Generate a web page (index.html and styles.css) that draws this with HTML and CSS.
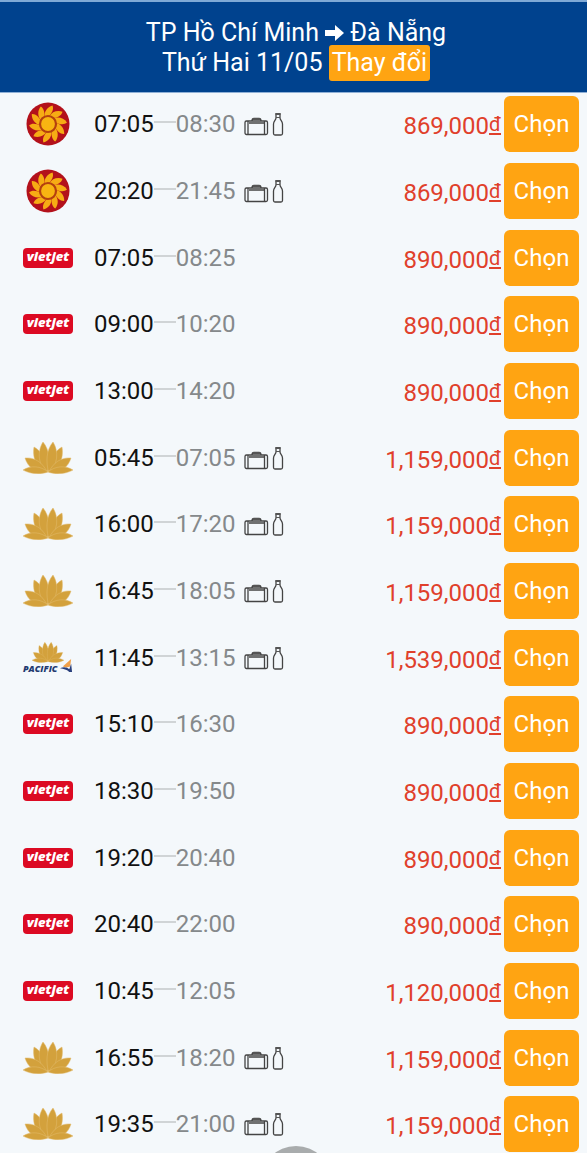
FILE: index.html
```html
<!DOCTYPE html>
<html lang="vi">
<head>
<meta charset="utf-8">
<meta name="viewport" content="width=device-width, initial-scale=1">
<title>TP Hồ Chí Minh - Đà Nẵng</title>
<link rel="stylesheet" href="styles.css">
</head>
<body>
<svg class="sprite" aria-hidden="true">
  <symbol id="sun" viewBox="0 0 44 44">
    <circle cx="22" cy="22" r="21.5" fill="#b3111b"/>
    <g fill="#f6ac14">
      <path id="ray" d="M18.500 14.500C18 10 21 5 26.500 3.500C28 7 26 11.500 22.500 14.500Z"/>
      <use href="#ray" transform="rotate(36 22 22)"/>
      <use href="#ray" transform="rotate(72 22 22)"/>
      <use href="#ray" transform="rotate(108 22 22)"/>
      <use href="#ray" transform="rotate(144 22 22)"/>
      <use href="#ray" transform="rotate(180 22 22)"/>
      <use href="#ray" transform="rotate(216 22 22)"/>
      <use href="#ray" transform="rotate(252 22 22)"/>
      <use href="#ray" transform="rotate(288 22 22)"/>
      <use href="#ray" transform="rotate(324 22 22)"/>
    </g>
    <circle cx="22" cy="22" r="8" fill="#f8b412" stroke="#b4400f" stroke-width="2.2"/>
  </symbol>
  <symbol id="lotus" viewBox="0 0 50 32">
    <g fill="#d3a13c" stroke="#e3bd70" stroke-width=".5">
      <path d="M11 5C19 9 23 19 23 30C14 28 9 16 11 5Z"/>
      <path d="M39 5C31 9 27 19 27 30C36 28 41 16 39 5Z"/>
      <path d="M20 0C27 8 27 20 24.500 30C15 24 14 9 20 0Z"/>
      <path d="M30 0C23 8 23 20 25.500 30C35 24 36 9 30 0Z"/>
      <path d="M2 16C12 15 20 21 24 30C13 31 5 26 2 16Z"/>
      <path d="M48 16C38 15 30 21 26 30C37 31 45 26 48 16Z"/>
      <path d="M0 28C8 23 18 24 25 30C17 33 7 32 0 28Z"/>
      <path d="M50 28C42 23 32 24 25 30C33 33 43 32 50 28Z"/>
    </g>
  </symbol>
  <symbol id="tail" viewBox="0 0 14 15">
    <path d="M3 8L12 0L11 8L7 9Z" fill="#f0a04a"/>
    <path d="M0 10C4 8 8 9 10 11L12 5L13 14H10C7 11 4 11 0 10Z" fill="#293f7c"/>
  </symbol>
  <symbol id="bags" viewBox="0 0 40 24">
    <g fill="none" stroke="#444" stroke-width="1.3">
      <rect x="1" y="9" width="22.500" height="13.500" rx="1.500"/>
      <path d="M4 9V22.500M20.500 9V22.500M8 9C8 7 9 6.500 10 6.500H15C16 6.500 17 7 17 9M5 11H20"/>
      <path d="M32 2H36V6C36 8 38.500 9 38.500 12V21.500Q38.500 23 37 23H31Q29.500 23 29.500 21.500V12C29.500 9 32 8 32 6Z"/>
    </g>
    <path d="M9 6H16V8H9ZM31.500 1H36.500V3H31.500ZM32 5H36V6H32Z" fill="#555"/>
  </symbol>
</svg>

<header class="trip">
  <h1 class="route">TP Hồ Chí Minh <svg class="arrow" viewBox="0 0 19 16" aria-label="đến"><path d="M0 5H10V0L19 8L10 16V11H0Z" fill="#fff"/></svg> Đà Nẵng</h1>
  <p class="date">Thứ Hai 11/05 <button class="change" type="button">Thay đổi</button></p>
</header>

<ul class="flights">
  <li class="flight"><span class="airline"><svg class="sun"><use href="#sun"/></svg></span><time class="depart">07:05</time><i class="dash"></i><time class="arrive">08:30</time><svg class="bags"><use href="#bags"/></svg><span class="price">869,000<u>đ</u></span><button class="choose" type="button">Chọn</button></li>
  <li class="flight"><span class="airline"><svg class="sun"><use href="#sun"/></svg></span><time class="depart">20:20</time><i class="dash"></i><time class="arrive">21:45</time><svg class="bags"><use href="#bags"/></svg><span class="price">869,000<u>đ</u></span><button class="choose" type="button">Chọn</button></li>
  <li class="flight"><span class="airline"><b class="vietjet">vietjet</b></span><time class="depart">07:05</time><i class="dash"></i><time class="arrive">08:25</time><span class="price">890,000<u>đ</u></span><button class="choose" type="button">Chọn</button></li>
  <li class="flight"><span class="airline"><b class="vietjet">vietjet</b></span><time class="depart">09:00</time><i class="dash"></i><time class="arrive">10:20</time><span class="price">890,000<u>đ</u></span><button class="choose" type="button">Chọn</button></li>
  <li class="flight"><span class="airline"><b class="vietjet">vietjet</b></span><time class="depart">13:00</time><i class="dash"></i><time class="arrive">14:20</time><span class="price">890,000<u>đ</u></span><button class="choose" type="button">Chọn</button></li>
  <li class="flight"><span class="airline"><svg class="lotus"><use href="#lotus"/></svg></span><time class="depart">05:45</time><i class="dash"></i><time class="arrive">07:05</time><svg class="bags"><use href="#bags"/></svg><span class="price">1,159,000<u>đ</u></span><button class="choose" type="button">Chọn</button></li>
  <li class="flight"><span class="airline"><svg class="lotus"><use href="#lotus"/></svg></span><time class="depart">16:00</time><i class="dash"></i><time class="arrive">17:20</time><svg class="bags"><use href="#bags"/></svg><span class="price">1,159,000<u>đ</u></span><button class="choose" type="button">Chọn</button></li>
  <li class="flight"><span class="airline"><svg class="lotus"><use href="#lotus"/></svg></span><time class="depart">16:45</time><i class="dash"></i><time class="arrive">18:05</time><svg class="bags"><use href="#bags"/></svg><span class="price">1,159,000<u>đ</u></span><button class="choose" type="button">Chọn</button></li>
  <li class="flight"><span class="airline pacific"><svg class="lotus small"><use href="#lotus"/></svg><span class="pacific-name"><b>PACIFIC</b><svg class="tail"><use href="#tail"/></svg></span></span><time class="depart">11:45</time><i class="dash"></i><time class="arrive">13:15</time><svg class="bags"><use href="#bags"/></svg><span class="price">1,539,000<u>đ</u></span><button class="choose" type="button">Chọn</button></li>
  <li class="flight"><span class="airline"><b class="vietjet">vietjet</b></span><time class="depart">15:10</time><i class="dash"></i><time class="arrive">16:30</time><span class="price">890,000<u>đ</u></span><button class="choose" type="button">Chọn</button></li>
  <li class="flight"><span class="airline"><b class="vietjet">vietjet</b></span><time class="depart">18:30</time><i class="dash"></i><time class="arrive">19:50</time><span class="price">890,000<u>đ</u></span><button class="choose" type="button">Chọn</button></li>
  <li class="flight"><span class="airline"><b class="vietjet">vietjet</b></span><time class="depart">19:20</time><i class="dash"></i><time class="arrive">20:40</time><span class="price">890,000<u>đ</u></span><button class="choose" type="button">Chọn</button></li>
  <li class="flight"><span class="airline"><b class="vietjet">vietjet</b></span><time class="depart">20:40</time><i class="dash"></i><time class="arrive">22:00</time><span class="price">890,000<u>đ</u></span><button class="choose" type="button">Chọn</button></li>
  <li class="flight"><span class="airline"><b class="vietjet">vietjet</b></span><time class="depart">10:45</time><i class="dash"></i><time class="arrive">12:05</time><span class="price">1,120,000<u>đ</u></span><button class="choose" type="button">Chọn</button></li>
  <li class="flight"><span class="airline"><svg class="lotus"><use href="#lotus"/></svg></span><time class="depart">16:55</time><i class="dash"></i><time class="arrive">18:20</time><svg class="bags"><use href="#bags"/></svg><span class="price">1,159,000<u>đ</u></span><button class="choose" type="button">Chọn</button></li>
  <li class="flight"><span class="airline"><svg class="lotus"><use href="#lotus"/></svg></span><time class="depart">19:35</time><i class="dash"></i><time class="arrive">21:00</time><svg class="bags"><use href="#bags"/></svg><span class="price">1,159,000<u>đ</u></span><button class="choose" type="button">Chọn</button></li>
</ul>
<div class="floating"></div>
</body>
</html>
```

FILE: styles.css
```css
* { box-sizing: border-box; }

body {
  margin: 0;
  background: #f4f8fb;
  color: #111;
  font: 24px/30px Roboto, "Noto Sans", sans-serif;
}

button { font: inherit; color: #fff; border: 0; background: #ffa412; cursor: pointer; }

.sprite { position: absolute; width: 0; height: 0; }

.trip {
  padding: 16px 0 14px 5px;
  border-top: 2px solid #7fa9d6;
  border-bottom: 1px solid #8fb0d6;
  background: #00428e;
  color: #fff;
  text-align: center;
}

.route, .date { margin: 0; font-size: 25px; font-weight: 400; line-height: 30px; }
.arrow { width: 19px; height: 16px; vertical-align: 0; }
.change { height: 36px; margin: -3px 0; padding: 0 3px; border-radius: 3px; line-height: 36px; vertical-align: baseline; }

.flights { margin: 0; padding: 3px 8px 0 23px; list-style: none; }
.flight { display: flex; align-items: center; height: 56px; margin-bottom: 11px; }
.flight:nth-child(3n) { margin-bottom: 10px; }
.flight:last-child { margin-bottom: 0; }

.airline { display: flex; justify-content: center; width: 50px; margin-right: 21px; }
.sun { width: 44px; height: 44px; }
.lotus { width: 50px; height: 32px; }
.vietjet {
  width: 50px;
  height: 20px;
  border-radius: 4px;
  background: #dc0a23;
  color: #fff;
  font: italic 800 13px/17px "Open Sans", sans-serif;
  text-align: center;
}
.pacific { flex-direction: column; align-items: center; }
.lotus.small { width: 32px; height: 21px; }
.pacific-name { display: flex; justify-content: space-between; width: 50px; height: 11px; color: #22396f; font: italic 9px/12px "Open Sans", sans-serif; }
.pacific-name b { font-weight: 800; }
.tail { width: 13px; height: 14px; margin-top: -4px; }

.dash { width: 22px; height: 2px; margin-top: -4px; background: #d0d4d6; }
.arrive { color: #85898b; }
.bags { width: 40px; height: 24px; margin-left: 8px; }
.price { margin: 4px 3px 0 auto; color: #e0402b; }
.price u { font-size: 20px; line-height: 20px; vertical-align: 3px; text-decoration-thickness: 2px; text-underline-offset: 2px; text-decoration-skip-ink: none; }
.choose { width: 75px; height: 56px; padding: 0; border-radius: 6px; }

.floating {
  position: fixed;
  bottom: -65px;
  left: 50%;
  width: 72px;
  height: 72px;
  margin-left: -34px;
  border-radius: 50%;
  background: #a9acad;
}
```
